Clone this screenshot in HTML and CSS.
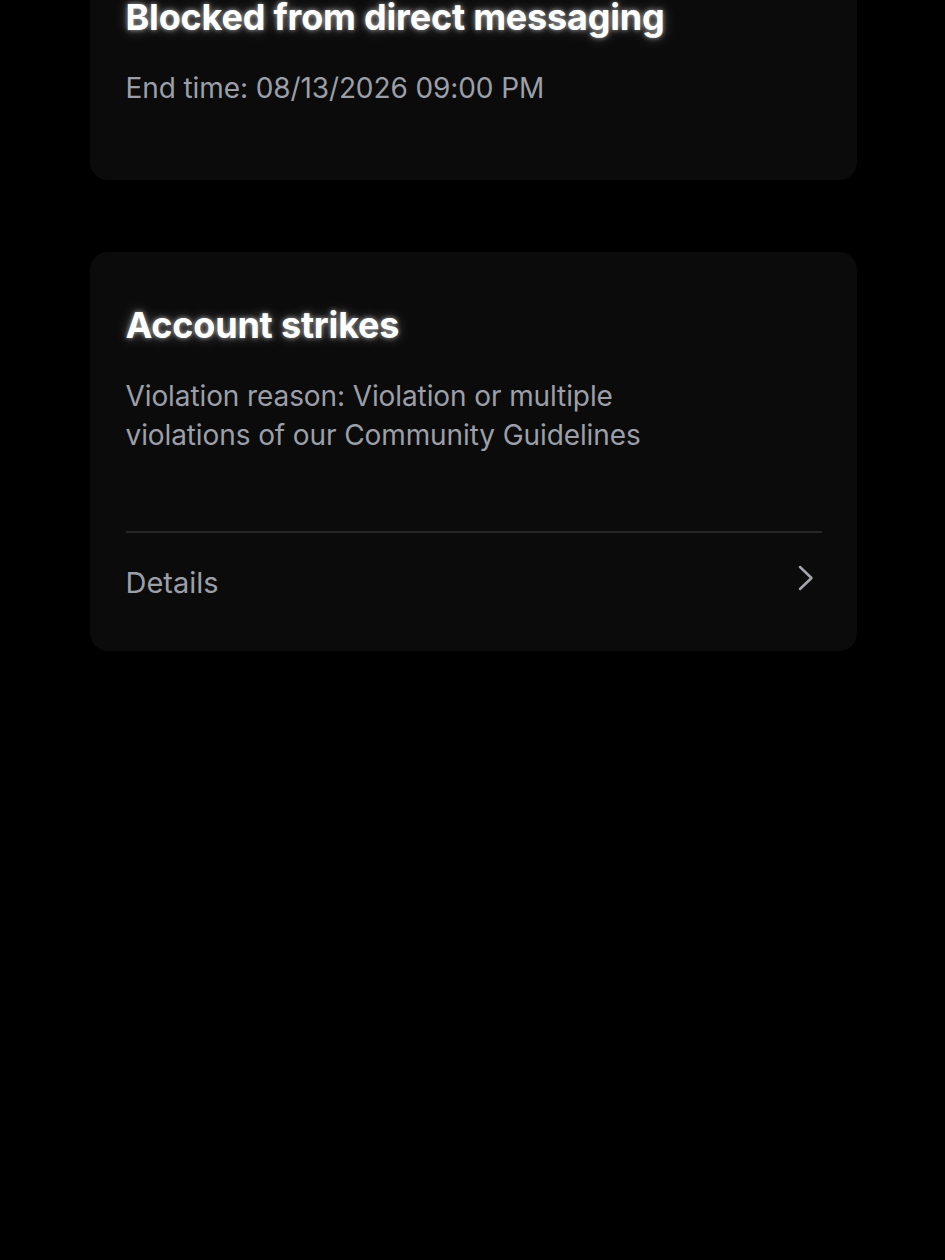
FILE: index.html
```html
<!DOCTYPE html>
<html lang="en">
<head>
<meta charset="utf-8">
<title>Account status</title>
<link rel="stylesheet" href="styles.css">
</head>
<body>
<main class="page">
  <section class="card card-first">
    <h2 class="card-title">Blocked from direct messaging</h2>
    <p class="card-text">End time: 08/13/2026 09:00 PM</p>
  </section>
  <section class="card">
    <h2 class="card-title">Account strikes</h2>
    <p class="card-text">Violation reason: Violation or multiple<br>violations of our Community Guidelines</p>
    <div class="divider"></div>
    <div class="row">
      <span class="row-label">Details</span>
      <svg class="chev" width="16" height="26" viewBox="0 0 16 26" aria-hidden="true">
        <path d="M2 2 L13.5 13 L2 24" fill="none" stroke="#a3a6ad" stroke-width="2.5" stroke-linecap="round" stroke-linejoin="round"/>
      </svg>
    </div>
  </section>
</main>
</body>
</html>
```
FILE: styles.css
```css
html, body {
  margin: 0;
  padding: 0;
  background: #000;
  height: 100%;
}
body {
  font-family: Inter, "Noto Sans", "Liberation Sans", sans-serif;
  overflow: hidden;
}
.page {
  width: 767px;
  margin: 0 auto;
  padding-left: 1px;
  display: flex;
  flex-direction: column;
  gap: 72px;
}
.card {
  background: #0b0b0b;
  border-radius: 18px;
  padding: 56px 35px 0 36px;
}
.card-first {
  margin-top: -56px;
  padding-bottom: 72px;
}
.card-title {
  margin: 0;
  font-size: 36px;
  line-height: 34px;
  font-weight: 700;
  color: #fff;
  letter-spacing: -0.2px;
  text-shadow: 0 0 5px rgba(255,255,255,0.6), 0 0 14px rgba(255,255,255,0.3);
}
.card-text {
  margin: 35px 0 0;
  font-size: 28px;
  line-height: 39px;
  font-weight: 400;
  color: #9c9fa7;
  letter-spacing: -0.1px;
}
.divider {
  margin-top: 76px;
  height: 2px;
  background: #262628;
}
.row {
  display: flex;
  align-items: center;
  justify-content: space-between;
  height: 98px;
  padding-bottom: 20px;
}
.row-label {
  font-size: 29px;
  color: #9c9fa7;
}
.chev {
  margin-right: 8px;
  margin-bottom: 9px;
}
```
